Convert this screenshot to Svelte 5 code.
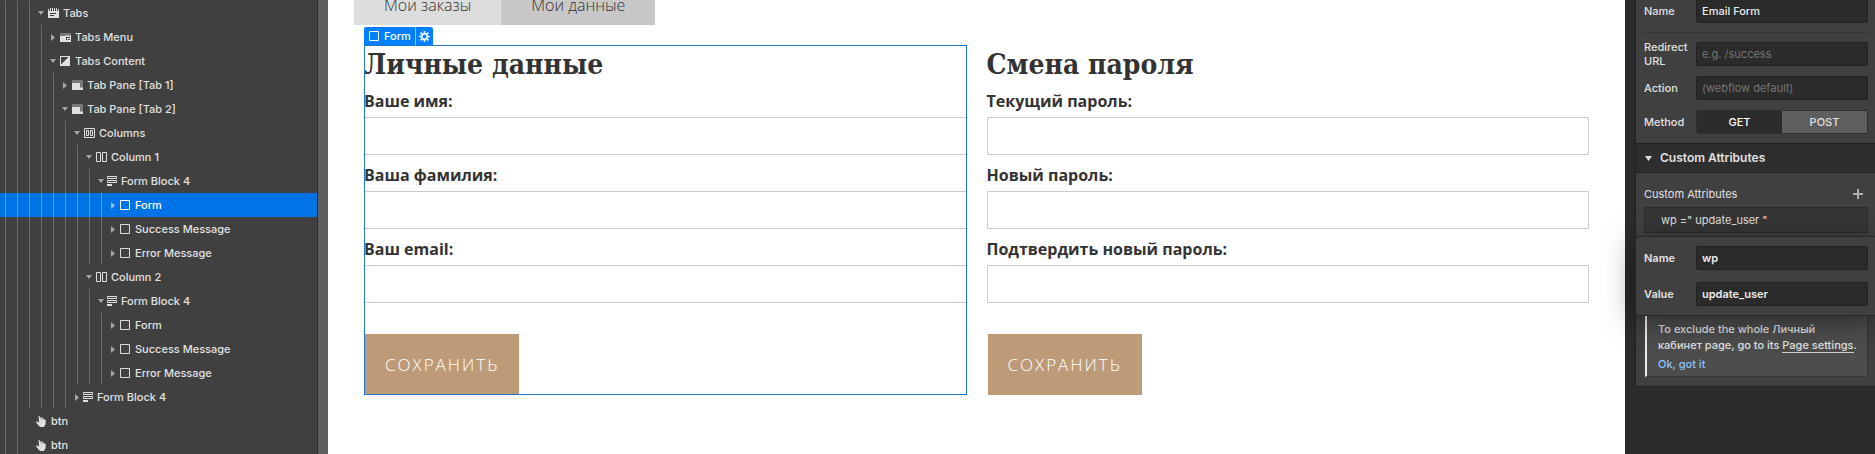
<script>
  const tree = [
    { depth: 3, icon: 'tabs', label: 'Tabs', open: true },
    { depth: 4, icon: 'menu', label: 'Tabs Menu', open: false },
    { depth: 4, icon: 'content', label: 'Tabs Content', open: true },
    { depth: 5, icon: 'pane', label: 'Tab Pane [Tab 1]', open: false },
    { depth: 5, icon: 'pane', label: 'Tab Pane [Tab 2]', open: true },
    { depth: 6, icon: 'columns', label: 'Columns', open: true },
    { depth: 7, icon: 'column', label: 'Column 1', open: true },
    { depth: 8, icon: 'block', label: 'Form Block 4', open: true },
    { depth: 9, icon: 'box', label: 'Form', open: false, selected: true },
    { depth: 9, icon: 'box', label: 'Success Message', open: false },
    { depth: 9, icon: 'box', label: 'Error Message', open: false },
    { depth: 7, icon: 'column', label: 'Column 2', open: true },
    { depth: 8, icon: 'block', label: 'Form Block 4', open: true },
    { depth: 9, icon: 'box', label: 'Form', open: false },
    { depth: 9, icon: 'box', label: 'Success Message', open: false },
    { depth: 9, icon: 'box', label: 'Error Message', open: false },
    { depth: 6, icon: 'block', label: 'Form Block 4', open: false },
    { depth: 2, icon: 'hand', label: 'btn' },
    { depth: 2, icon: 'hand', label: 'btn' }
  ];

  const forms = [
    { id: 'profile', title: 'Личные данные', selected: true, fields: ['Ваше имя:', 'Ваша фамилия:', 'Ваш email:'] },
    { id: 'password', title: 'Смена пароля', selected: false, fields: ['Текущий пароль:', 'Новый пароль:', 'Подтвердить новый пароль:'] }
  ];

  let method = $state('GET');
  let formName = $state('Email Form');
  let attrName = $state('wp');
  let attrValue = $state('update_user');
</script>

{#snippet glyph(name)}
  <svg class="icon" viewBox="0 0 11 11" width="11" height="11" aria-hidden="true">
    {#if name === 'tabs'}
      <path fill="currentColor" fill-rule="evenodd" d="M0 1h1v2h1V0h1v3h1V0h1v3h1V0h1v3h1V0h1v3h1V1h1v9H0zM2 5v1h6V5zM2 7v1h4V7z" />
    {:else if name === 'menu'}
      <path fill="#777" d="M0 1h11v3H0z" />
      <path fill="currentColor" fill-rule="evenodd" d="M0 4h5V3.500h6V10H0zM6 5v3h1V6h3V5zM8 7v1h2V7z" />
    {:else if name === 'content'}
      <path fill="currentColor" fill-rule="evenodd" d="M0 0h10v10H0zM1 1v7.500L8.500 1z" />
    {:else if name === 'pane'}
      <path fill="#777" d="M0 0h11v8H0z" />
      <path fill="currentColor" d="M0 3h8v4.500h3V10H0z" />
    {:else if name === 'columns'}
      <path fill="none" stroke="currentColor" d="M.5.5h10v9H.5zM2.500 2.500h2v5h-2zM6.500 2.500h2v5h-2z" />
    {:else if name === 'column'}
      <path fill="none" stroke="currentColor" d="M.5.5h4v9h-4zM6.500.5h4v9h-4z" />
    {:else if name === 'block'}
      <path fill="none" stroke="currentColor" d="M.5.5h9v2h-9zM.5 4.500h9v2h-9z" />
      <path fill="currentColor" d="M0 8h5v2H0z" />
    {:else if name === 'box'}
      <path fill="none" stroke="currentColor" d="M.5.5h9v9h-9z" />
    {:else if name === 'hand'}
      <path fill="currentColor" d="M2.500 0h1l.8 3.800V1h1v3l.4-2.500h1V4.300l.6-1.900h.9v2.400l.7-1.300.9.200-.2 4.300L8 11H4L.2 6.800V5.500l1.200-.1 1.700 1.400z" />
    {/if}
  </svg>
{/snippet}

<div class="app">
  <nav class="navigator" aria-label="Navigator">
    <ul>
      {#each tree as node}
        <li>
          <button type="button" class="node" class:selected={node.selected} class:compact={node.icon === 'block'}>
            {#each { length: node.depth } as _}<span class="guide"></span>{/each}
            <span class="arrow">
              {#if node.open === true}
                <svg width="6" height="4" viewBox="0 0 6 4" aria-hidden="true"><path fill="currentColor" d="M0 0h6L3 4z" /></svg>
              {:else if node.open === false}
                <svg width="4" height="7" viewBox="0 0 4 7" aria-hidden="true"><path fill="currentColor" d="M0 0l4 3.500L0 7z" /></svg>
              {/if}
            </span>
            {@render glyph(node.icon)}
            <span class="name">{node.label}</span>
          </button>
        </li>
      {/each}
    </ul>
  </nav>

  <main>
    <div class="tabs">
      <button type="button">Мои заказы</button>
      <button type="button" class="current">Мои данные</button>
    </div>
    <div class="columns">
      {#each forms as form}
        <form class:outlined={form.selected}>
          {#if form.selected}
            <div class="badge">
              <span class="badge-name">{@render glyph('box')}Form</span>
              <button type="button" aria-label="Form settings">
                <svg width="11" height="11" viewBox="0 0 11 11" aria-hidden="true">
                  <circle cx="5.500" cy="5.500" r="2.800" fill="none" stroke="currentColor" stroke-width="1.600" />
                  <path stroke="currentColor" stroke-width="1.700" d="M5.500 0v2M5.500 9v2M0 5.500h2M9 5.500h2M1.600 1.600l1.400 1.400M8 8l1.400 1.400M1.600 9.400L3 8M8 3l1.400-1.400" />
                </svg>
              </button>
            </div>
          {/if}
          <h2>{form.title}</h2>
          {#each form.fields as field, i}
            <label for="{form.id}-{i}">{field}</label>
            <input id="{form.id}-{i}" type="text" />
          {/each}
          <button type="button" class="save">СОХРАНИТЬ</button>
        </form>
      {/each}
    </div>
  </main>

  <aside>
    <div class="panel">
      <section class="settings">
        <div class="row first">
          <label for="form-name">Name</label>
          <input id="form-name" type="text" bind:value={formName} />
        </div>
        <hr />
        <div class="row">
          <label for="redirect">Redirect URL</label>
          <input id="redirect" type="text" placeholder="e.g. /success" />
        </div>
        <div class="row">
          <label for="action">Action</label>
          <input id="action" type="text" placeholder="(webflow default)" />
        </div>
        <div class="row">
          <span>Method</span>
          <div class="switch">
            {#each ['GET', 'POST'] as option}
              <button type="button" class:on={method === option} onclick={() => (method = option)}>{option}</button>
            {/each}
          </div>
        </div>
      </section>
      <button type="button" class="heading">
        <svg width="7" height="5" viewBox="0 0 7 5" aria-hidden="true"><path fill="currentColor" d="M0 0h7L3.500 5z" /></svg>
        Custom Attributes
      </button>
      <section class="attributes">
        <div class="title">
          <span>Custom Attributes</span>
          <button type="button" aria-label="Add attribute">
            <svg width="10" height="10" viewBox="0 0 10 10" aria-hidden="true"><path stroke="currentColor" stroke-width="2" d="M5 0v10M0 5h10" /></svg>
          </button>
        </div>
        <div class="holder">
          <button type="button" class="attribute">wp =" update_user "</button>
          <div class="popover">
            <div class="row">
              <label for="attr-name">Name</label>
              <input id="attr-name" type="text" bind:value={attrName} />
            </div>
            <div class="row">
              <label for="attr-value">Value</label>
              <input id="attr-value" type="text" bind:value={attrValue} />
            </div>
          </div>
        </div>
        <div class="note">
          <p>To exclude the whole Личный кабинет page, go to its <a href="#settings">Page settings</a>.</p>
          <button type="button">Ok, got it</button>
        </div>
      </section>
    </div>
  </aside>
</div>

<style>
  :global(body) {
    overflow: hidden;
  }
  .app {
    display: grid;
    grid-template-columns: 328px 1fr 250px;
    height: 100vh;
    overflow: hidden;
    background: #fff;
    color: #e0e0e0;
    font: 12px/16px Inter, sans-serif;
  }
  .app * {
    box-sizing: border-box;
  }
  button,
  input {
    margin: 0;
    padding: 0;
    border: 0;
    border-radius: 0;
    background: none;
    color: inherit;
    font: inherit;
  }
  svg {
    display: block;
    flex: none;
  }

  .navigator {
    min-height: 0;
    overflow: hidden;
    padding-top: 1px;
    border-right: 10px solid #5e5e5e;
    background: #404040;
  }
  ul {
    margin: 0;
    padding: 0;
    list-style: none;
    border-right: 1px solid #2b2b2b;
  }
  .node {
    display: flex;
    align-items: center;
    width: 100%;
    height: 24px;
    font-size: 11px;
    font-weight: 500;
    text-align: left;
  }
  .node.selected {
    background: #0073e6;
    color: #fff;
  }
  .guide {
    flex: none;
    align-self: stretch;
    width: 7px;
    margin-left: 5px;
    border-left: 1px solid #6b6b6b;
  }
  .selected .guide {
    border-color: #4d9dee;
  }
  .arrow {
    display: flex;
    flex: none;
    justify-content: center;
    width: 12px;
    padding-right: 2px;
    color: #a6a6a6;
  }
  .selected .arrow {
    color: #8cc0f5;
  }
  .name {
    padding-left: 4px;
  }
  .compact .arrow {
    width: 11px;
    padding-right: 1px;
  }
  .compact .name {
    padding-left: 3px;
  }

  main {
    min-width: 0;
    padding: 0 36px;
    color: #333;
    font-family: "Open Sans", sans-serif;
  }
  .tabs {
    display: flex;
    margin: -15px -10px 20px;
  }
  .tabs button {
    height: 40px;
    padding: 0 30px;
    background: #ddd;
    color: #333;
    font-size: 16px;
    font-weight: 300;
  }
  .tabs .current {
    background: #c8c8c8;
  }
  .columns {
    display: grid;
    grid-template-columns: 1fr 1fr;
    gap: 20px;
  }
  form {
    position: relative;
    display: flex;
    flex-direction: column;
    align-items: flex-start;
  }
  .outlined::after {
    content: "";
    position: absolute;
    inset: 0;
    border: 1px solid #1f78c8;
    pointer-events: none;
  }
  .badge {
    position: absolute;
    bottom: 100%;
    left: 0;
    display: flex;
    height: 18px;
    border-radius: 2px 2px 0 0;
    background: #0080ff;
    color: #fff;
    font: 500 11px/18px Inter, sans-serif;
  }
  .badge-name {
    display: flex;
    align-items: center;
    gap: 4px;
    padding: 0 4px 0 5px;
  }
  .badge button {
    display: flex;
    align-items: center;
    padding: 0 3px;
    border-left: 1px solid #8cc6ff;
  }
  h2 {
    margin: 0 0 6px;
    padding-top: 1px;
    font: bold 28px/38px "DejaVu Serif Condensed", "DejaVu Serif", serif;
  }
  form label {
    margin-bottom: 5px;
    font-size: 16px;
    font-weight: 700;
    line-height: 22px;
  }
  form input {
    width: 100%;
    height: 38px;
    margin-bottom: 9px;
    padding: 8px 12px;
    border: 1px solid #ccc;
    background: #fff;
    font-size: 14px;
  }
  .save {
    height: 61px;
    margin: 22px 0 0 1px;
    padding: 0 20px;
    background: #be9b78;
    color: #fff;
    font-size: 17px;
    font-weight: 300;
    letter-spacing: 2px;
  }

  aside {
    position: relative;
    padding-left: 10px;
    background: #2b2b2b;
  }
  .panel {
    border-left: 1px solid #222;
  }
  .settings {
    display: flex;
    flex-direction: column;
    gap: 10px;
    padding: 0 7px 9px 8px;
    background: #404040;
  }
  .row {
    display: grid;
    grid-template-columns: 44px 1fr;
    gap: 8px;
    align-items: center;
    align-content: center;
    height: 24px;
    font-size: 11px;
    font-weight: 500;
    line-height: 14px;
  }
  .first {
    margin-top: -1px;
  }
  hr {
    width: 100%;
    height: 1px;
    margin: -1px 0;
    border: 0;
    background: #333;
  }
  .row input {
    width: 100%;
    min-width: 0;
    height: 24px;
    padding: 0 5px;
    border: 1px solid #212121;
    border-radius: 2px;
    background: #2b2b2b;
    color: #ebebeb;
  }
  .row input::placeholder {
    color: #757575;
    opacity: 1;
    font-weight: 400;
  }
  .switch {
    display: grid;
    grid-template-columns: 1fr 1fr;
    height: 24px;
    border: 1px solid #303030;
    border-radius: 2px;
    overflow: hidden;
    background: #5e5e5e;
  }
  .switch .on {
    background: #2b2b2b;
    color: #fff;
  }
  .heading {
    display: flex;
    align-items: center;
    gap: 8px;
    width: 100%;
    height: 30px;
    padding: 0 9px;
    border-top: 1px solid #212121;
    border-bottom: 1px solid #212121;
    background: #2e2e2e;
    font-size: 12px;
    font-weight: 600;
  }
  .attributes {
    padding: 12px 7px 9px 8px;
    border-bottom: 1px solid #212121;
    background: #404040;
    font-size: 11px;
  }
  .title {
    display: flex;
    align-items: center;
    justify-content: space-between;
    height: 18px;
    margin-bottom: 4px;
    padding-right: 5px;
  }
  .title button {
    color: #b0b0b0;
  }
  .holder {
    position: relative;
  }
  .attribute {
    display: block;
    width: 100%;
    height: 26px;
    padding: 0 16px;
    border: 1px solid #2b2b2b;
    background: #363636;
    text-align: left;
  }
  .popover {
    position: absolute;
    top: 30px;
    right: -7px;
    left: -8px;
    display: grid;
    gap: 12px;
    padding: 9px 7px 9px 8px;
    border-radius: 3px 0 0 3px;
    background: #404040;
    box-shadow: 0 0 0 1px #262626, 0 5px 30px rgba(0, 0, 0, 0.5);
  }
  .popover .row {
    font-weight: 600;
  }
  .note {
    margin: 12px 0 0 1px;
    padding: 75px 9px 4px 11px;
    border: 1px solid #363636;
    border-left: 2px solid #ebebeb;
    background: #4d4d4d;
    font-weight: 500;
  }
  .note p {
    margin: 0 0 3px;
  }
  .note a {
    border-bottom: 1px solid #d0d0d0;
    color: inherit;
    text-decoration: none;
  }
  .note button {
    color: #8ac2ff;
  }
</style>
